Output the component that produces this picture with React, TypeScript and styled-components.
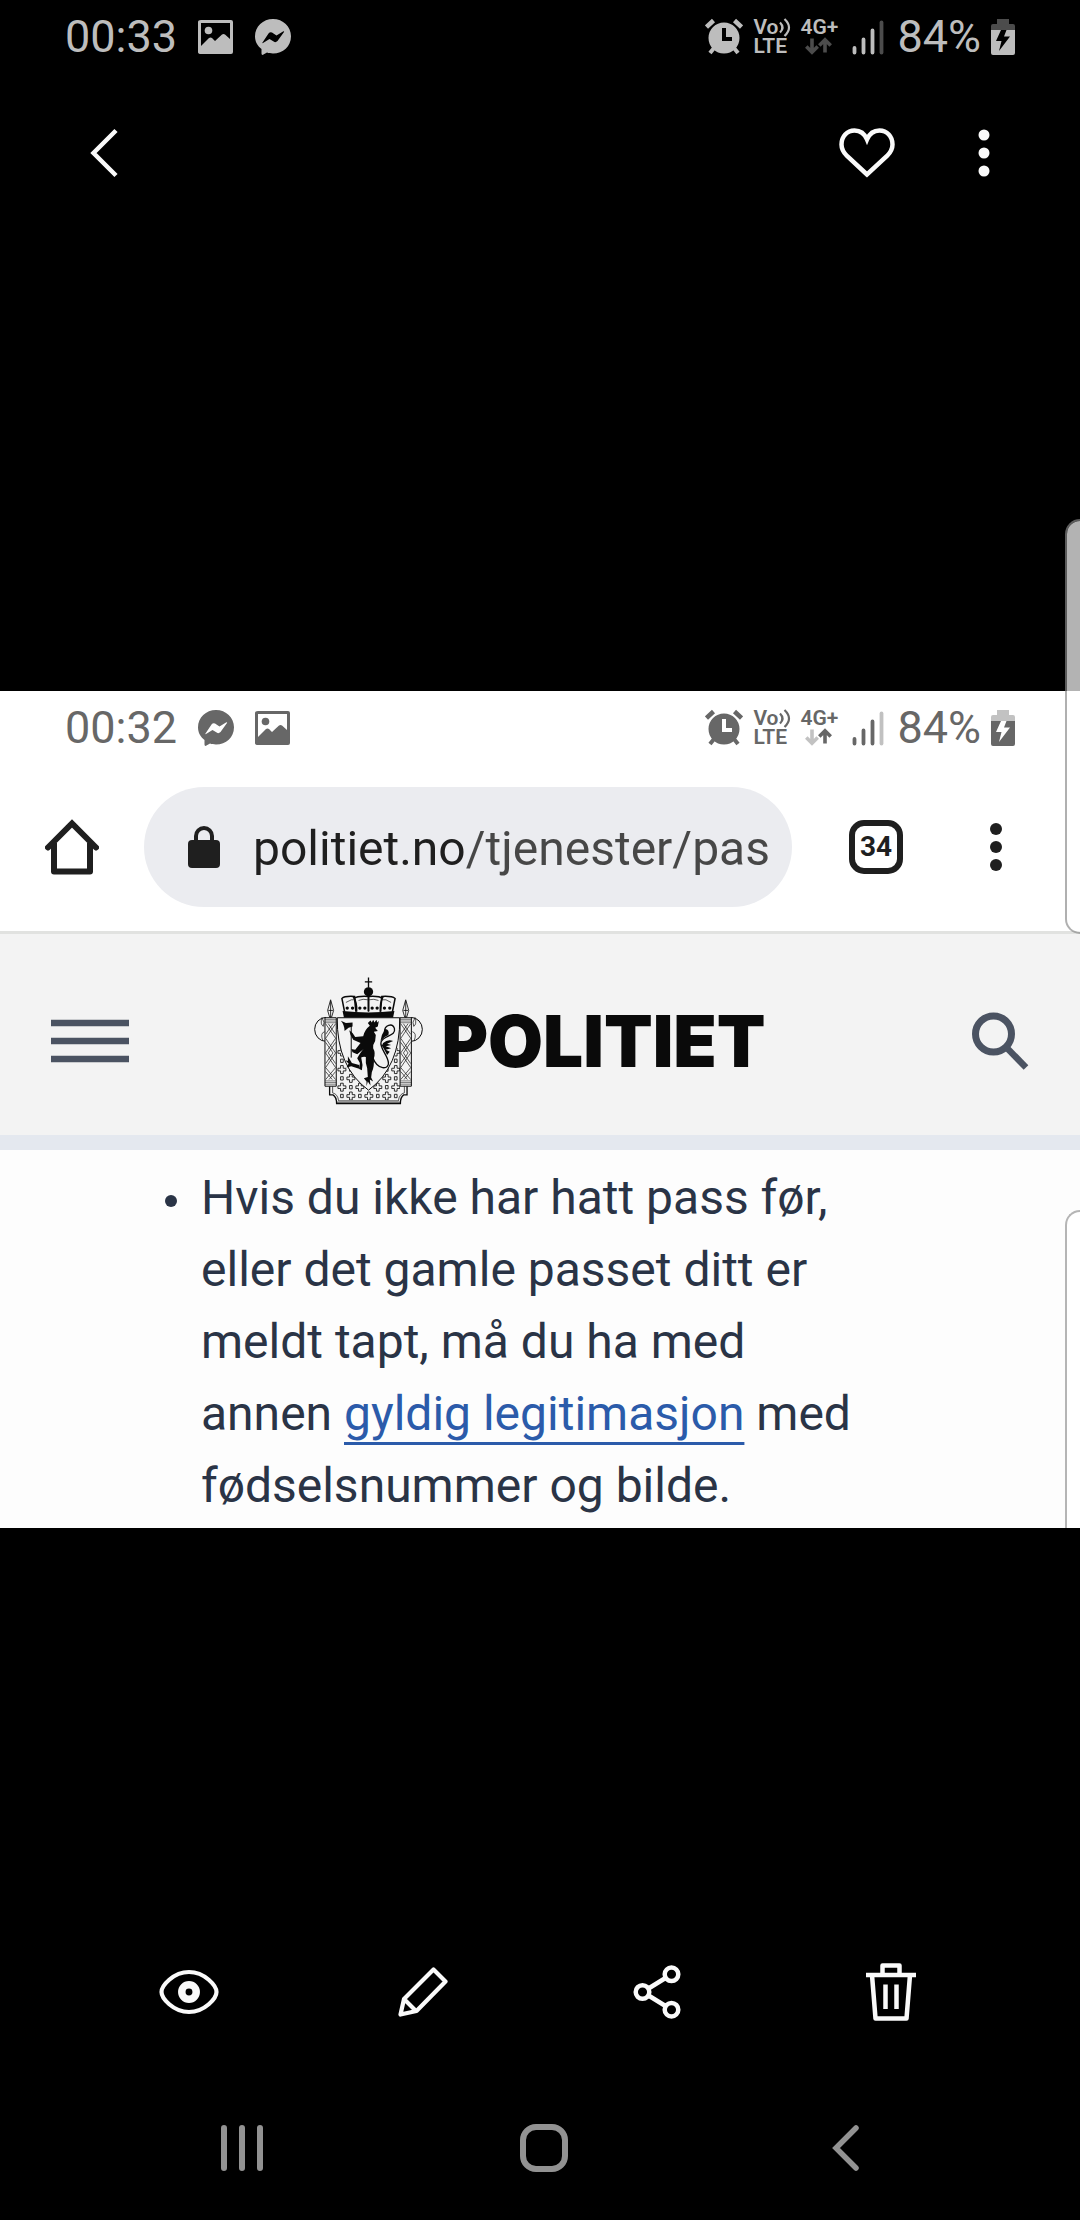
import React from "react";
import styled, { createGlobalStyle } from "styled-components";

const GlobalStyle = createGlobalStyle`
  *, *::before, *::after { box-sizing: border-box; }
  body {
    margin: 0;
    background: #000;
    font-family: Roboto, "Noto Sans", sans-serif;
  }
  svg { display: block; flex: none; }
`;

const Screen = styled.div`
  position: relative;
  display: flex;
  flex-direction: column;
  min-height: 100vh;
  overflow: hidden;
  background: #000;
`;

const IconButton = styled.button`
  display: flex;
  align-items: center;
  justify-content: center;
  padding: 0;
  border: 0;
  background: none;
  color: inherit;
  cursor: pointer;
`;

/* ---------- status bar ---------- */

const StatusRow = styled.div<{ $color: string }>`
  display: flex;
  align-items: center;
  justify-content: space-between;
  height: 74px;
  padding: 0 65px;
  color: ${(p) => p.$color};
`;

const StatusGroup = styled.div<{ $gap: number }>`
  display: flex;
  align-items: center;
  gap: ${(p) => p.$gap}px;
`;

const StatusText = styled.span`
  font-size: 45px;
  line-height: 52px;
`;

const Stack = styled.span`
  display: flex;
  flex-direction: column;
  align-items: center;
  width: 37px;
  font-size: 21px;
  font-weight: 600;
  line-height: 19px;
`;

const StackLine = styled.span`
  display: flex;
  align-items: center;
  align-self: flex-start;
  height: 19px;
`;

const PictureIcon = () => (
  <svg width="36" height="36" viewBox="0 0 36 36" aria-hidden="true">
    <path
      fill="currentColor"
      fillRule="evenodd"
      d="M3 1H33Q35 1 35 3V33Q35 35 33 35H3Q0 35 0 33V3Q0 1 3 1ZM3 4V27L11 19Q12.500 18 14 19L17 22L24 15.500Q25.500 14.500 27 15.500L32 20V4Z"
    />
    <circle cx="10.500" cy="11.500" r="3.800" fill="currentColor" />
  </svg>
);

const MessengerIcon = () => (
  <svg width="36" height="36" viewBox="0 0 36 36" aria-hidden="true">
    <path
      fill="currentColor"
      fillRule="evenodd"
      d="M18 0C28 0 36 7.500 36 17.200C36 27.500 28 34.500 18 34.500C15.600 34.500 13.800 34.200 12 33.600L8 35.800Q6.500 36.200 6.500 34.500V30C2.500 27 0 22.600 0 17.200C0 7.500 8 0 18 0ZM7.500 23.500Q7 24.500 8 24L14.500 20L19.500 23Q21 23.500 22.500 22L29 13Q29.500 11.800 28 12.500L21.500 16.500L17 13.500Q15 12.500 13.500 14.500Z"
    />
  </svg>
);

const AlarmIcon = () => (
  <svg width="38" height="38" viewBox="0 0 38 38" aria-hidden="true">
    <path
      fill="currentColor"
      fillRule="evenodd"
      d="M19 4.500A15.500 15.500 0 1 1 19 35.500A15.500 15.500 0 1 1 19 4.500ZM17 10V23H27V19H21V10Z"
    />
    <g stroke="currentColor" fill="none">
      <path strokeWidth="4.500" d="M1.500 9L8.500 2.500M29.500 2.500L36.500 9" />
      <path strokeWidth="4" d="M5 35L9 30M33 35L29 30" />
    </g>
  </svg>
);

const WaveIcon = () => (
  <svg width="12" height="19" viewBox="0 0 12 19" aria-hidden="true">
    <path
      fill="none"
      stroke="currentColor"
      strokeWidth="2.200"
      d="M1 4.500Q6 9.500 1 14.500M5.500 1Q14.500 9.500 5.500 18"
    />
  </svg>
);

const DataArrowsIcon = ({ upActive }: { upActive: boolean }) => (
  <svg width="27" height="19" viewBox="0 0 27 19" aria-hidden="true">
    <g fill="none" stroke="currentColor" strokeWidth="3.600">
      <path opacity="0.4" d="M7 1.500V15M1.300 9.500L7 15.200L12.700 9.500" />
      <path opacity={upActive ? 1 : 0.4} d="M20 15.500V3M14.300 8.500L20 2.800L25.700 8.500" />
    </g>
  </svg>
);

const SignalIcon = () => (
  <svg width="40" height="36" viewBox="0 0 40 36" aria-hidden="true">
    <g stroke="currentColor" strokeWidth="3.800" strokeLinecap="round">
      <path d="M7.500 29V33.500M16.500 20.500V33.500M25.500 11.500V33.500" />
      <path opacity="0.4" d="M34.500 3.500V33.500" />
    </g>
  </svg>
);

const BatteryIcon = () => (
  <svg width="24" height="36" viewBox="0 0 24 36" aria-hidden="true">
    <path
      fill="currentColor"
      opacity="0.4"
      d="M6 0H18V5H22Q24 5 24 7V11H0V7Q0 5 2 5H6Z"
    />
    <path
      fill="currentColor"
      fillRule="evenodd"
      d="M0 11H24V34Q24 36 22 36H2Q0 36 0 34ZM10 11L5 22H10.500L8 32L19 17.500H13L15.500 11Z"
    />
  </svg>
);

type StatusBarProps = {
  time: string;
  color: string;
  upActive: boolean;
  icons: React.ReactNode;
};

const StatusBar = ({ time, color, upActive, icons }: StatusBarProps) => (
  <StatusRow $color={color}>
    <StatusGroup $gap={21}>
      <StatusText>{time}</StatusText>
      {icons}
    </StatusGroup>
    <StatusGroup $gap={10}>
      <AlarmIcon />
      <Stack>
        <StackLine>
          Vo
          <WaveIcon />
        </StackLine>
        <StackLine>LTE</StackLine>
      </Stack>
      <Stack>
        <StackLine>4G+</StackLine>
        <DataArrowsIcon upActive={upActive} />
      </Stack>
      <SignalIcon />
      <StatusText>84%</StatusText>
      <BatteryIcon />
    </StatusGroup>
  </StatusRow>
);

/* ---------- gallery chrome ---------- */

const TitleBar = styled.header`
  display: flex;
  align-items: center;
  justify-content: space-between;
  height: 158px;
  padding: 0 90px;
  color: #fafafa;
`;

const TitleActions = styled.div`
  display: flex;
  align-items: center;
  gap: 83px;
`;

const Viewer = styled.main`
  display: flex;
  flex: 1;
  align-items: center;
  padding-top: 79px;
`;

const EditBar = styled.nav`
  display: grid;
  grid-template-columns: repeat(4, 1fr);
  height: 168px;
  padding: 0 72px;
  color: #fafafa;
`;

const SystemNav = styled.nav`
  display: grid;
  grid-template-columns: repeat(3, 1fr);
  height: 144px;
  padding: 0 83px 0 91px;
  color: #929292;
`;

const EdgeHandle = styled.div`
  position: absolute;
  top: 519px;
  right: 0;
  width: 15px;
  height: 415px;
  border: 2px solid rgba(137, 137, 137, 0.67);
  border-right: 0;
  border-radius: 18px 0 0 18px;
  background: rgba(255, 255, 255, 0.7);
  background-clip: padding-box;
`;

const DotsIcon = ({ radius }: { radius: number }) => (
  <svg width="12" height="50" viewBox="0 0 12 50" fill="currentColor" aria-hidden="true">
    <circle cx="6" cy="7" r={radius} />
    <circle cx="6" cy="25" r={radius} />
    <circle cx="6" cy="43" r={radius} />
  </svg>
);

/* ---------- captured page ---------- */

const Photo = styled.article`
  position: relative;
  flex: 1;
  min-width: 0;
  overflow: hidden;
  background: #fff;
`;

const BrowserBar = styled.div`
  display: flex;
  align-items: center;
  height: 166px;
  padding: 0 78px 2px 45px;
  color: #1f1f1f;
`;

const AddressPill = styled.label`
  display: flex;
  flex: 1;
  align-items: center;
  gap: 32px;
  min-width: 0;
  height: 120px;
  margin: 0 57px 0 45px;
  padding: 0 24px 0 44px;
  border-radius: 60px;
  background: #ebecf0;
`;

const AddressInput = styled.input`
  flex: 1;
  min-width: 0;
  padding: 4px 0 0;
  border: 0;
  outline: 0;
  font-family: inherit;
  font-size: 48px;
  line-height: 60px;
  color: #1f1f1f;
  background: linear-gradient(90deg, #1f1f1f 213px, #474747 213px);
  background-clip: text;
  -webkit-background-clip: text;
  -webkit-text-fill-color: transparent;
`;

const TabButton = styled(IconButton)`
  width: 54px;
  height: 54px;
  margin-right: 87px;
  border: 6px solid #1f1f1f;
  border-radius: 15px;
  font-family: inherit;
  font-size: 28px;
  font-weight: 700;
  line-height: 32px;
`;

const SiteHeader = styled.header`
  display: grid;
  grid-template-columns: 1fr auto 1fr;
  align-items: center;
  height: 219px;
  padding: 12px 51px 0;
  border-top: 3px solid #e1e2e0;
  border-bottom: 15px solid #e4e8ef;
  background: #f3f3f3;
  color: #4b5362;
`;

const MenuButton = styled(IconButton)`
  justify-self: start;
`;

const SearchButton = styled(IconButton)`
  justify-self: end;
`;

const Brand = styled.a`
  display: flex;
  align-items: center;
  gap: 18px;
  color: #0a0a0a;
  font-family: Inter, Roboto, sans-serif;
  font-size: 71px;
  font-weight: 900;
  line-height: 84px;
  text-decoration: none;
`;

const Advice = styled.ul`
  margin: 0;
  padding: 12px 200px 6px 165px;
  list-style: none;
  background: #fdfdfd;
  color: #2a3446;
  font-size: 48px;
  line-height: 72px;
`;

const AdviceItem = styled.li`
  display: flex;
  gap: 24px;

  &::before {
    content: "";
    flex: none;
    width: 12px;
    height: 12px;
    margin-top: 33px;
    border-radius: 50%;
    background: currentColor;
  }
`;

const TextLink = styled.a`
  color: #2b5baa;
  text-decoration: underline;
  text-decoration-thickness: 3px;
  text-underline-offset: 12px;
  text-decoration-skip-ink: none;
`;

const PhotoHandle = styled.div`
  position: absolute;
  top: 519px;
  right: 0;
  bottom: 0;
  width: 15px;
  border: 2px solid #b5b5b5;
  border-right: 0;
  border-bottom: 0;
  border-radius: 18px 0 0 0;
  background: #fff;
`;

const plusMarks: Array<[number, number]> = [];
const squareMarks: Array<[number, number]> = [];
for (let row = 0; row < 6; row += 1) {
  for (let col = 0; col < 7; col += 1) {
    const at: [number, number] = [132 + col * 27, 273 + row * 26.5];
    ((row + col) % 2 === 0 ? plusMarks : squareMarks).push(at);
  }
}

const Pillar = ({ x }: { x: number }) => (
  <g transform={`translate(${x} 0)`} fill="none" stroke="#0a0a0a">
    <path strokeWidth="3" d="M0 170H34V376H0Z" fill="#f3f3f3" />
    <path strokeWidth="1.500" d="M0 175H34M0 180H34M0 185H34M0 360H34M0 365H34M0 370H34" />
    <path
      strokeWidth="2"
      d="M2 188L32 232L2 276L32 320L2 356M32 188L2 232L32 276L2 320L32 356M10 188L32 220M24 188L2 220M2 244L24 276M32 244L10 276M10 276L32 308M24 276L2 308M2 332L22 356M32 332L12 356"
    />
    <path strokeWidth="2.500" d="M17 116L26 148L20 168H14L8 148ZM17 120V168M10 148H24" fill="#f3f3f3" />
  </g>
);

const Crest = () => (
  <svg width="109" height="128" viewBox="48 48 328 384" aria-hidden="true">
    <g fill="none" stroke="#0a0a0a" strokeWidth="3">
      <path d="M84 169A34 36 0 1 0 84 241M340 169A34 36 0 1 1 340 241" />
      <path strokeWidth="2" d="M72 170Q82 184 76 196Q66 190 72 170M80 212Q66 216 74 238M352 170Q342 184 348 196Q358 190 352 170M344 212Q358 216 350 238" />
      <path strokeWidth="4" d="M95 376V402H105Q116 408 116 428H308Q308 408 318 402H328V376" />
      <path strokeWidth="2" d="M104 376V396Q120 400 122 420H302Q304 400 320 396V376M116 424H308" />
    </g>

    <clipPath id="mantle">
      <path d="M117 250L124 250Q134 320 212 388Q290 320 300 250L307 250V418H117Z" />
    </clipPath>
    <g clipPath="url(#mantle)" fill="none" stroke="#0a0a0a" strokeWidth="2.500">
      {plusMarks.map(([x, y]) => (
        <path key={`${x}-${y}`} d={`M${x - 4} ${y - 12}h8v8h8v8h-8v8h-8v-8h-8v-8h8z`} />
      ))}
      {squareMarks.map(([x, y]) => (
        <path key={`${x}-${y}`} d={`M${x - 4} ${y - 5}h8v10h-8z`} />
      ))}
    </g>

    <path
      d="M118 170H306Q308 318 212 388Q116 318 118 170Z"
      fill="#f3f3f3"
      stroke="#0a0a0a"
      strokeWidth="3"
    />
    <Pillar x={81} />
    <Pillar x={307} />

    {/* crown */}
    <g fill="none" stroke="#0a0a0a">
      <path strokeWidth="4" d="M212 49V80M201 62H223" />
      <circle cx="212" cy="92" r="14" fill="#0a0a0a" stroke="none" />
      <path fill="#0a0a0a" stroke="none" d="M134 150Q212 158 290 150L286 169H138Z" />
      <path strokeWidth="4.500" d="M140 152L132 112Q140 104 170 106L174 152M174 152L170 112Q178 104 212 106V152M212 152V106Q246 104 252 112L248 152M248 152L252 106Q282 104 292 112L284 152" />
      <path strokeWidth="2" d="M144 124Q162 112 174 116M182 118Q196 112 210 116M214 116Q228 112 242 118M250 116Q264 112 280 124" />
      <path strokeWidth="5" d="M166 106Q178 124 176 152M212 100V150M256 106Q246 124 248 152" />
    </g>
    <g fill="#0a0a0a">
      {[148, 164, 186, 201, 223, 238, 260, 276].map((x) => (
        <circle key={x} cx={x} cy="141" r="5" />
      ))}
    </g>

    {/* lion with axe */}
    <g fill="#0a0a0a">
      <path d="M129 179L144 186L164 184V196L152 200L140 210Q140 192 129 179Z" />
      <path d="M218 178L222 184L226 176L230 184L236 176L238 184L243 180L240 196L232 200L240 210L228 212L234 222L232 240Q224 252 226 262Q234 276 228 292Q230 318 222 334L220 350L226 362L216 356L218 374L210 362L206 376L206 362L198 352L210 348L208 322Q202 308 204 288Q196 286 190 290L194 312L192 328L184 324L186 306L178 292Q190 270 200 262L178 280L164 274L160 264L172 266L188 246L166 236L158 222L154 208L164 216L172 228L196 226Q200 206 216 194L210 186Z" />
      <path d="M150 286L162 306L184 312L186 324L160 316L146 320L152 308L142 298L150 300Z" />
    </g>
    <g fill="none" stroke="#0a0a0a">
      <path strokeWidth="3" d="M160 192V290" />
      <path strokeWidth="4" d="M224 288C240 330 274 326 272 306C270 280 244 262 250 242C258 222 296 226 290 202C284 184 260 192 260 212" />
    </g>
    <path fill="#0a0a0a" d="M262 204Q276 206 272 222Q260 226 248 240Q250 222 262 204ZM256 246Q270 234 286 240L268 248L280 252L264 256L280 262L264 266L276 272L268 282Q258 262 252 254Z" />
  </svg>
);

export default function App() {
  return (
    <Screen>
      <GlobalStyle />
      <StatusBar
        time="00:33"
        color="#bdbdbd"
        upActive={false}
        icons={
          <>
            <PictureIcon />
            <MessengerIcon />
          </>
        }
      />
      <TitleBar>
        <IconButton aria-label="Tilbake">
          <svg width="28" height="50" viewBox="0 0 28 50" aria-hidden="true">
            <path d="M26 2.500L3.500 25L26 47.500" fill="none" stroke="currentColor" strokeWidth="4.500" />
          </svg>
        </IconButton>
        <TitleActions>
          <IconButton aria-label="Favoritt">
            <svg width="56" height="50" viewBox="0 0 56 50" aria-hidden="true">
              <path
                d="M28 46.500L8 28C4.500 24.500 2.500 21 2.500 16.500C2.500 8.500 8 2.500 15.500 2.500C21 2.500 25.500 5.500 28 11.500C30.500 5.500 35 2.500 40.500 2.500C48 2.500 53.500 8.500 53.500 16.500C53.500 21 51.500 24.500 48 28Z"
                fill="none"
                stroke="currentColor"
                strokeWidth="4.500"
              />
            </svg>
          </IconButton>
          <IconButton aria-label="Flere valg">
            <DotsIcon radius={5.5} />
          </IconButton>
        </TitleActions>
      </TitleBar>

      <Viewer>
        <Photo>
          <StatusBar
            time="00:32"
            color="#676767"
            upActive
            icons={
              <>
                <MessengerIcon />
                <PictureIcon />
              </>
            }
          />
          <BrowserBar>
            <IconButton aria-label="Hjem">
              <svg width="54" height="56" viewBox="0 0 54 56" aria-hidden="true">
                <g fill="none" stroke="currentColor" strokeWidth="6">
                  <path strokeLinecap="round" d="M3 28.500L27 4.500L51 28.500" />
                  <path strokeLinejoin="round" d="M9 24V52.500H45V24" />
                </g>
              </svg>
            </IconButton>
            <AddressPill>
              <svg width="33" height="42" viewBox="0 0 33 42" aria-hidden="true">
                <rect y="14" width="32" height="28" rx="4" fill="currentColor" />
                <path d="M8 16V10A8 8 0 0 1 24 10V16" fill="none" stroke="currentColor" strokeWidth="4" />
              </svg>
              <AddressInput
                type="text"
                aria-label="Adresse"
                defaultValue="politiet.no/tjenester/pas"
              />
            </AddressPill>
            <TabButton aria-label="34 faner">34</TabButton>
            <IconButton aria-label="Meny">
              <DotsIcon radius={6} />
            </IconButton>
          </BrowserBar>

          <SiteHeader>
            <MenuButton aria-label="Hovedmeny">
              <svg width="78" height="44" viewBox="0 0 78 44" aria-hidden="true">
                <path d="M0 4H78M0 22H78M0 40H78" stroke="currentColor" strokeWidth="6.500" />
              </svg>
            </MenuButton>
            <Brand href="#">
              <Crest />
              POLITIET
            </Brand>
            <SearchButton aria-label="Søk">
              <svg width="57" height="58" viewBox="0 0 57 58" aria-hidden="true">
                <g fill="none" stroke="currentColor">
                  <circle cx="21.500" cy="22" r="18" strokeWidth="7" />
                  <path d="M34 35L54 55.500" strokeWidth="6.500" />
                </g>
              </svg>
            </SearchButton>
          </SiteHeader>

          <Advice>
            <AdviceItem>
              <span>
                Hvis du ikke har hatt pass før, eller det gamle passet ditt er meldt tapt, må du ha
                med annen <TextLink href="#">gyldig legitimasjon</TextLink> med fødselsnummer og
                bilde.
              </span>
            </AdviceItem>
          </Advice>
          <PhotoHandle />
        </Photo>
      </Viewer>

      <EditBar aria-label="Bildehandlinger">
        <IconButton aria-label="Vis">
          <svg width="60" height="46" viewBox="0 0 60 46" aria-hidden="true">
            <g fill="none" stroke="currentColor">
              <path strokeWidth="4.200" d="M2.500 23C2.500 17 14 3 30 3S57.500 17 57.500 23S46 43 30 43S2.500 29 2.500 23Z" />
              <circle cx="30" cy="23" r="7.200" strokeWidth="7.500" />
            </g>
          </svg>
        </IconButton>
        <IconButton aria-label="Rediger">
          <svg width="50" height="50" viewBox="0 0 50 50" aria-hidden="true">
            <path
              d="M6 32L35.500 2.500L47.500 14.500L18.500 44L2.500 47.500L6 32L18.500 44.500"
              fill="none"
              stroke="currentColor"
              strokeWidth="4.200"
              strokeLinejoin="round"
            />
          </svg>
        </IconButton>
        <IconButton aria-label="Del">
          <svg width="48" height="54" viewBox="0 0 48 54" aria-hidden="true">
            <g fill="none" stroke="currentColor" strokeWidth="4.500">
              <circle cx="9.500" cy="27" r="6.800" />
              <circle cx="38.500" cy="9.300" r="6.800" />
              <circle cx="38.500" cy="44.700" r="6.800" />
              <path d="M15.500 23.500L32.500 13M15.500 30.500L32.500 41" />
            </g>
          </svg>
        </IconButton>
        <IconButton aria-label="Slett">
          <svg width="50" height="58" viewBox="0 0 50 58" aria-hidden="true">
            <g fill="none" stroke="currentColor" strokeWidth="4.500" strokeLinejoin="round">
              <path d="M0 12H50M16.500 12V2.500H33.500V12M6 12L9.500 55.500H40.500L44 12" />
              <path d="M19.500 21.500V46M30.500 21.500V46" />
            </g>
          </svg>
        </IconButton>
      </EditBar>

      <SystemNav aria-label="Systemnavigasjon">
        <IconButton aria-label="Nylige apper">
          <svg width="42" height="46" viewBox="0 0 42 46" aria-hidden="true">
            <path d="M3 3V43M21 3V43M39 3V43" stroke="currentColor" strokeWidth="6" strokeLinecap="round" />
          </svg>
        </IconButton>
        <IconButton aria-label="Startskjerm">
          <svg width="48" height="48" viewBox="0 0 48 48" aria-hidden="true">
            <rect x="3" y="3" width="42" height="42" rx="13" fill="none" stroke="currentColor" strokeWidth="6" />
          </svg>
        </IconButton>
        <IconButton aria-label="Tilbake">
          <svg width="28" height="46" viewBox="0 0 28 46" aria-hidden="true">
            <path d="M24 3L4 23L24 43" fill="none" stroke="currentColor" strokeWidth="5.500" strokeLinecap="round" />
          </svg>
        </IconButton>
      </SystemNav>
      <EdgeHandle />
    </Screen>
  );
}
